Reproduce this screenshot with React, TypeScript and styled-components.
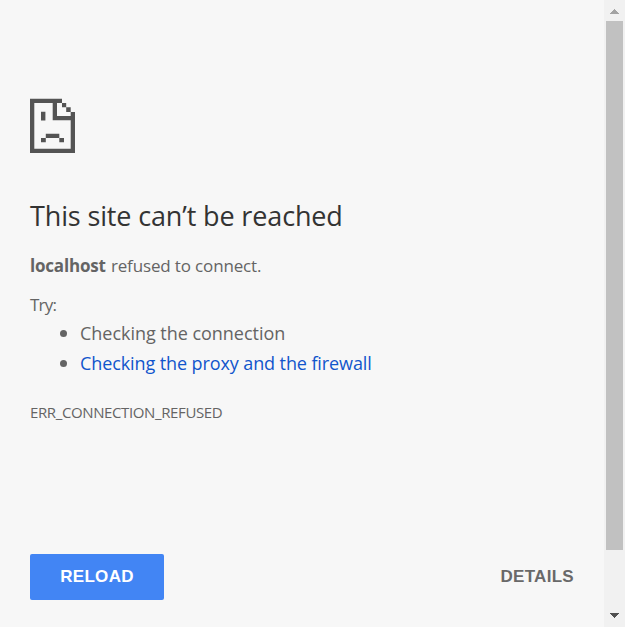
import React from "react";
import styled, { createGlobalStyle } from "styled-components";

const GlobalStyle = createGlobalStyle`
  * { box-sizing: border-box; }
  body { margin: 0; background: #f7f7f7; overflow: hidden; }
`;

const Page = styled.div`
  display: flex;
  width: 625px;
  height: 627px;
  background: #f7f7f7;
  color: #646464;
  font-family: "Open Sans", "Noto Sans", sans-serif;
  font-weight: 400;
`;

const Content = styled.main`
  flex: 1;
  padding: 98px 30px 27px;
  display: flex;
  flex-direction: column;
  align-items: flex-start;
`;

const ErrorIcon = styled.svg`
  display: block;
  width: 46px;
  height: 56px;
  flex: none;
`;

const Title = styled.h1`
  margin: 44px 0 0;
  height: 36px;
  line-height: 36px;
  font-size: 27px;
  font-weight: 400;
  letter-spacing: -0.14px;
  color: #333;
  white-space: nowrap;
`;

const Text = styled.p<{ $top: number; $size: number; $spacing: number }>`
  margin: ${(p) => p.$top}px 0 0;
  height: 24px;
  line-height: 24px;
  font-size: ${(p) => p.$size}px;
  letter-spacing: ${(p) => p.$spacing}px;
  white-space: nowrap;
`;

const Host = styled.strong`
  font-weight: 700;
  letter-spacing: -0.2px;
  margin-right: 1px;
`;

const Suggestions = styled.ul`
  list-style: none;
  margin: 1px 0 1px;
  padding: 0 0 0 30px;
`;

const Suggestion = styled.li<{ $spacing: number }>`
  display: flex;
  align-items: center;
  height: 30px;
  font-size: 18px;
  letter-spacing: ${(p) => p.$spacing}px;
  white-space: nowrap;

  &::before {
    content: "";
    width: 7px;
    height: 7px;
    margin-right: 13px;
    border-radius: 50%;
    background: #646464;
  }
`;

const Link = styled.a`
  color: #1155cc;
  text-decoration: none;
`;

const Actions = styled.div`
  display: flex;
  justify-content: space-between;
  width: 100%;
  margin-top: auto;
`;

const Button = styled.button<{ $primary?: boolean }>`
  width: ${(p) => (p.$primary ? "134px" : "auto")};
  height: 46px;
  padding: 0;
  border: 0;
  border-radius: 2px;
  background: ${(p) => (p.$primary ? "#4285f4" : "transparent")};
  color: ${(p) => (p.$primary ? "#fff" : "#696969")};
  font: 700 17px "Liberation Sans", Arial, sans-serif;
  letter-spacing: 0.3px;
`;

const Scrollbar = styled.div`
  display: flex;
  flex-direction: column;
  align-items: center;
  width: 21px;
  background: #f1f1f1;
`;

const Arrow = styled.svg`
  display: block;
  width: 21px;
  height: 21px;
  flex: none;
`;

const Thumb = styled.div`
  width: 17px;
  height: 529px;
  margin-bottom: auto;
  background: #c1c1c1;
`;

export default function App() {
  return (
    <>
      <GlobalStyle />
      <Page>
        <Content>
          <ErrorIcon viewBox="30 98 46 56" fill="#545454" aria-hidden="true">
            <path d="M30 98.7H62V103H57V116H75V153H30ZM34.3 103V148.7H70.7V120.3H52.7V103Z" fillRule="evenodd" />
            <path d="M62 103H66.2V107.2H70.7V112H75V116.5H70.7V112H66.2V107.2H62Z" />
            <path d="M41 111.8H45.4V120.4H41ZM45.8 133.8H59.3V138H64V142.3H59.3V138H45.8V142.3H41V138H45.8Z" />
          </ErrorIcon>
          <Title>This site can’t be reached</Title>
          <Text $top={20} $size={17} $spacing={-0.15}>
            <Host>localhost</Host> refused to connect.
          </Text>
          <Text $top={15} $size={17} $spacing={-0.8}>Try:</Text>
          <Suggestions>
            <Suggestion $spacing={-0.03}>Checking the connection</Suggestion>
            <Suggestion $spacing={-0.1}><Link>Checking the proxy and the firewall</Link></Suggestion>
          </Suggestions>
          <Text $top={21} $size={15} $spacing={-0.38}>ERR_CONNECTION_REFUSED</Text>
          <Actions>
            <Button $primary>RELOAD</Button>
            <Button>DETAILS</Button>
          </Actions>
        </Content>
        <Scrollbar>
          <Arrow viewBox="0 0 21 21" fill="#a3a3a3" shapeRendering="crispEdges"><path d="M6 14L10.5 9L15 14Z" /></Arrow>
          <Thumb />
          <Arrow viewBox="0 0 21 21" fill="#505050" shapeRendering="crispEdges"><path d="M6 7H15L10.5 12Z" /></Arrow>
        </Scrollbar>
      </Page>
    </>
  );
}
